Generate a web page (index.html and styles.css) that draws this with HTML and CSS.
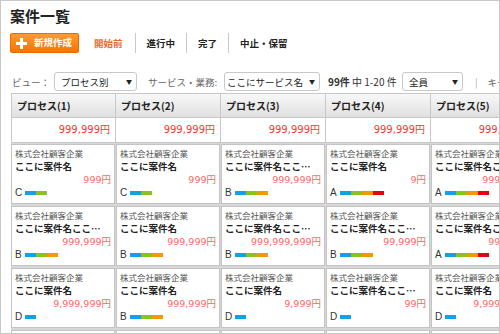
FILE: index.html
```html
<!DOCTYPE html>
<html lang="ja">
<head>
    <meta charset="UTF-8">
    <meta name="viewport" content="width=device-width, initial-scale=1.0">
    <title>案件一覧</title>
    <link rel="stylesheet" href="styles.css">
</head>
<body>
    <div class="page">
        <h1 class="title">案件一覧</h1>

        <!-- Toolbar -->
        <div class="toolbar">
            <button class="new-btn">
                <svg class="plus" width="11" height="11" viewBox="0 0 11 11"><path d="M5.5 0v11M0 5.5h11" stroke="#fff" stroke-width="3"/></svg>
                <span>新規作成</span>
            </button>
            <ul class="tabs">
                <li class="tab active">開始前</li>
                <li class="tab">進行中</li>
                <li class="tab">完了</li>
                <li class="tab">中止・保留</li>
            </ul>
        </div>

        <!-- Filters -->
        <div class="filters">
            <span class="label">ビュー：</span>
            <div class="select select-view"><span>プロセス別</span><i>▼</i></div>
            <span class="label label-service">サービス・業務:</span>
            <div class="select select-service"><span>ここにサービス名</span><i>▼</i></div>
            <span class="count"><b>99件</b> 中 1-20 件</span>
            <div class="select select-member"><span>全員</span><i>▼</i></div>
            <span class="bar-sep">|</span>
            <span class="label label-key">キー</span>
        </div>

        <!-- Board -->
        <div class="board">
            <div class="board-head">
                <div class="head-cell">プロセス(1)</div>
                <div class="head-cell">プロセス(2)</div>
                <div class="head-cell">プロセス(3)</div>
                <div class="head-cell">プロセス(4)</div>
                <div class="head-cell">プロセス(5)</div>
            </div>
            <div class="board-sum">
                <div class="sum-cell">999,999円</div>
                <div class="sum-cell">999,999円</div>
                <div class="sum-cell">999,999円</div>
                <div class="sum-cell">999,999円</div>
                <div class="sum-cell">999,999円</div>
            </div>
            <div class="board-body">
                <!-- row 1 -->
                <div class="card"><div class="company">株式会社顧客企業</div><div class="name">ここに案件名</div><div class="amount">999円</div><div class="rank"><span class="letter">C</span><span class="seg blue"></span><span class="seg green"></span></div></div>
                <div class="card"><div class="company">株式会社顧客企業</div><div class="name">ここに案件名</div><div class="amount">999円</div><div class="rank"><span class="letter">C</span><span class="seg blue"></span><span class="seg green"></span></div></div>
                <div class="card"><div class="company">株式会社顧客企業</div><div class="name">ここに案件名ここ…</div><div class="amount">999,999円</div><div class="rank"><span class="letter">B</span><span class="seg blue"></span><span class="seg green"></span><span class="seg orange"></span></div></div>
                <div class="card"><div class="company">株式会社顧客企業</div><div class="name">ここに案件名</div><div class="amount">9円</div><div class="rank"><span class="letter">A</span><span class="seg blue"></span><span class="seg green"></span><span class="seg orange"></span><span class="seg red"></span></div></div>
                <div class="card"><div class="company">株式会社顧客企業</div><div class="name">ここに案件名ここ…</div><div class="amount">999,999円</div><div class="rank"><span class="letter">A</span><span class="seg blue"></span><span class="seg green"></span><span class="seg orange"></span><span class="seg red"></span></div></div>
                <!-- row 2 -->
                <div class="card"><div class="company">株式会社顧客企業</div><div class="name">ここに案件名ここ…</div><div class="amount">999,999円</div><div class="rank"><span class="letter">B</span><span class="seg blue"></span><span class="seg green"></span><span class="seg orange"></span></div></div>
                <div class="card"><div class="company">株式会社顧客企業</div><div class="name">ここに案件名</div><div class="amount">999,999円</div><div class="rank"><span class="letter">B</span><span class="seg blue"></span><span class="seg green"></span><span class="seg orange"></span></div></div>
                <div class="card"><div class="company">株式会社顧客企業</div><div class="name">ここに案件名ここ…</div><div class="amount">999,999,999円</div><div class="rank"><span class="letter">B</span><span class="seg blue"></span><span class="seg green"></span><span class="seg orange"></span></div></div>
                <div class="card"><div class="company">株式会社顧客企業</div><div class="name">ここに案件名ここ…</div><div class="amount">99,999円</div><div class="rank"><span class="letter">B</span><span class="seg blue"></span><span class="seg green"></span><span class="seg orange"></span></div></div>
                <div class="card"><div class="company">株式会社顧客企業</div><div class="name">ここに案件名ここ…</div><div class="amount">99,999円</div><div class="rank"><span class="letter">A</span><span class="seg blue"></span><span class="seg green"></span><span class="seg orange"></span><span class="seg red"></span></div></div>
                <!-- row 3 -->
                <div class="card"><div class="company">株式会社顧客企業</div><div class="name">ここに案件名</div><div class="amount">9,999,999円</div><div class="rank"><span class="letter">D</span><span class="seg blue"></span></div></div>
                <div class="card"><div class="company">株式会社顧客企業</div><div class="name">ここに案件名</div><div class="amount">999,999円</div><div class="rank"><span class="letter">B</span><span class="seg blue"></span><span class="seg green"></span><span class="seg orange"></span></div></div>
                <div class="card"><div class="company">株式会社顧客企業</div><div class="name">ここに案件名</div><div class="amount">9,999円</div><div class="rank"><span class="letter">D</span><span class="seg blue"></span></div></div>
                <div class="card"><div class="company">株式会社顧客企業</div><div class="name">ここに案件名ここ…</div><div class="amount">99円</div><div class="rank"><span class="letter">D</span><span class="seg blue"></span></div></div>
                <div class="card"><div class="company">株式会社顧客企業</div><div class="name">ここに案件名</div><div class="amount">9,999,999円</div><div class="rank"><span class="letter">D</span><span class="seg blue"></span></div></div>
                <!-- row 4 -->
                <div class="card"><div class="company">株式会社顧客企業</div><div class="name">ここに案件名</div><div class="amount">999円</div></div>
                <div class="card"><div class="company">株式会社顧客企業</div><div class="name">ここに案件名</div><div class="amount">999円</div></div>
                <div class="card"><div class="company">株式会社顧客企業</div><div class="name">ここに案件名</div><div class="amount">999円</div></div>
                <div class="card"><div class="company">株式会社顧客企業</div><div class="name">ここに案件名</div><div class="amount">999円</div></div>
                <div class="card"><div class="company">株式会社顧客企業</div><div class="name">ここに案件名</div><div class="amount">999円</div></div>
            </div>
        </div>
    </div>
</body>
</html>
```

FILE: styles.css
```css
:root {
    --orange: #f57a10;
    --tab-active: #f2692e;
    --text-dark: #222222;
    --text-gray: #555555;
    --line: #c8c8c8;
    --money: #ff6666;
    --money-strong: #ff3333;
}

* {
    margin: 0;
    padding: 0;
    box-sizing: border-box;
}

body {
    font-family: "Noto Sans CJK JP", "Noto Sans", sans-serif;
    color: var(--text-dark);
    background: #ffffff;
}

.page {
    width: 500px;
    height: 334px;
    border: 1px solid var(--line);
    padding: 5px 0 0 9px;
    overflow: hidden;
}

.title {
    font-size: 15px;
    line-height: 20px;
    font-weight: 700;
}

/* Toolbar */
.toolbar {
    display: flex;
    align-items: center;
    height: 20px;
    margin-top: 7px;
}

.new-btn {
    display: flex;
    align-items: center;
    gap: 7px;
    width: 69px;
    height: 20px;
    padding-left: 5px;
    border: 1px solid #ec6a00;
    border-radius: 2px;
    background: linear-gradient(#ff9a35, #f57400);
    color: #ffffff;
    font-family: inherit;
    font-size: 9.5px;
    font-weight: 700;
    line-height: 1;
}

.tabs {
    display: flex;
    list-style: none;
    margin-left: 15px;
}

.tab {
    height: 20px;
    line-height: 20px;
    padding: 0 11px;
    font-size: 9.5px;
    font-weight: 700;
    border-left: 1px solid var(--line);
}

.tab.active {
    color: var(--tab-active);
    border-left: none;
    padding-left: 0;
    padding-right: 12px;
}

/* Filters */
.filters {
    display: flex;
    align-items: center;
    height: 19px;
    margin-top: 19px;
    font-size: 9.5px;
    white-space: nowrap;
}

.filters > * {
    flex-shrink: 0;
}

.label {
    color: #666666;
    margin-left: 2px;
    margin-right: 4px;
}

.label-service {
    margin-left: 11px;
    margin-right: 0;
    width: 76px;
}

.label-key {
    margin-left: 10px;
}

.select {
    display: flex;
    align-items: center;
    justify-content: space-between;
    height: 19px;
    padding: 0 4px 0 6px;
    border: 1px solid var(--line);
    border-radius: 3px;
    background: #ffffff;
}

.select i {
    font-style: normal;
    font-size: 6px;
    color: #222222;
}

.select-view { width: 83px; }
.select-service { width: 96px; padding-left: 2px; }
.select-member { width: 61px; }

.count {
    width: 82px;
    padding-left: 8px;
    font-size: 10px;
    color: #333333;
}

.count b {
    font-weight: 700;
}

.bar-sep {
    margin-left: 12px;
    color: #aaaaaa;
}

/* Board */
.board {
    margin-top: 2px;
    margin-left: 1px;
}

.board-head,
.board-sum {
    display: grid;
    grid-template-columns: repeat(5, 105px);
}

.head-cell {
    height: 25px;
    line-height: 23px;
    padding-left: 5px;
    font-size: 10px;
    font-weight: 700;
    border: 1px solid var(--line);
    border-left: none;
    background: linear-gradient(#f8f8f8, #e0e0e0);
}

.sum-cell {
    height: 25px;
    line-height: 24px;
    padding-right: 5px;
    text-align: right;
    font-family: "DejaVu Sans", "Noto Sans CJK JP", sans-serif;
    font-size: 10px;
    color: var(--money-strong);
    border-right: 1px solid var(--line);
    border-bottom: 1px solid var(--line);
}

.head-cell:first-child,
.sum-cell:first-child {
    border-left: 1px solid var(--line);
}

.board-body {
    display: grid;
    grid-template-columns: repeat(5, 104px);
    column-gap: 1px;
    row-gap: 2px;
    padding-top: 1px;
    background: #d8d8d8;
}

.card {
    height: 60px;
    padding: 2px 3px 4px;
    border: 1px solid #c4c4c4;
    background: #ffffff;
    white-space: nowrap;
    overflow: hidden;
}

.company {
    font-size: 8.5px;
    line-height: 13px;
    color: var(--text-gray);
}

.name {
    font-size: 9.5px;
    line-height: 13px;
    font-weight: 700;
}

.amount {
    font-family: "DejaVu Sans", "Noto Sans CJK JP", sans-serif;
    font-size: 9.5px;
    line-height: 13px;
    text-align: right;
    color: var(--money);
}

.rank {
    display: flex;
    align-items: center;
    height: 13px;
}

.letter {
    width: 10px;
    font-family: "Liberation Sans", sans-serif;
    font-size: 10px;
    color: #333333;
}

.seg {
    width: 11px;
    height: 4px;
}

.seg.blue { background: #14a0e6; }
.seg.green { background: #8cc21e; }
.seg.orange { background: #f39a00; }
.seg.red { background: #e60012; }
```
